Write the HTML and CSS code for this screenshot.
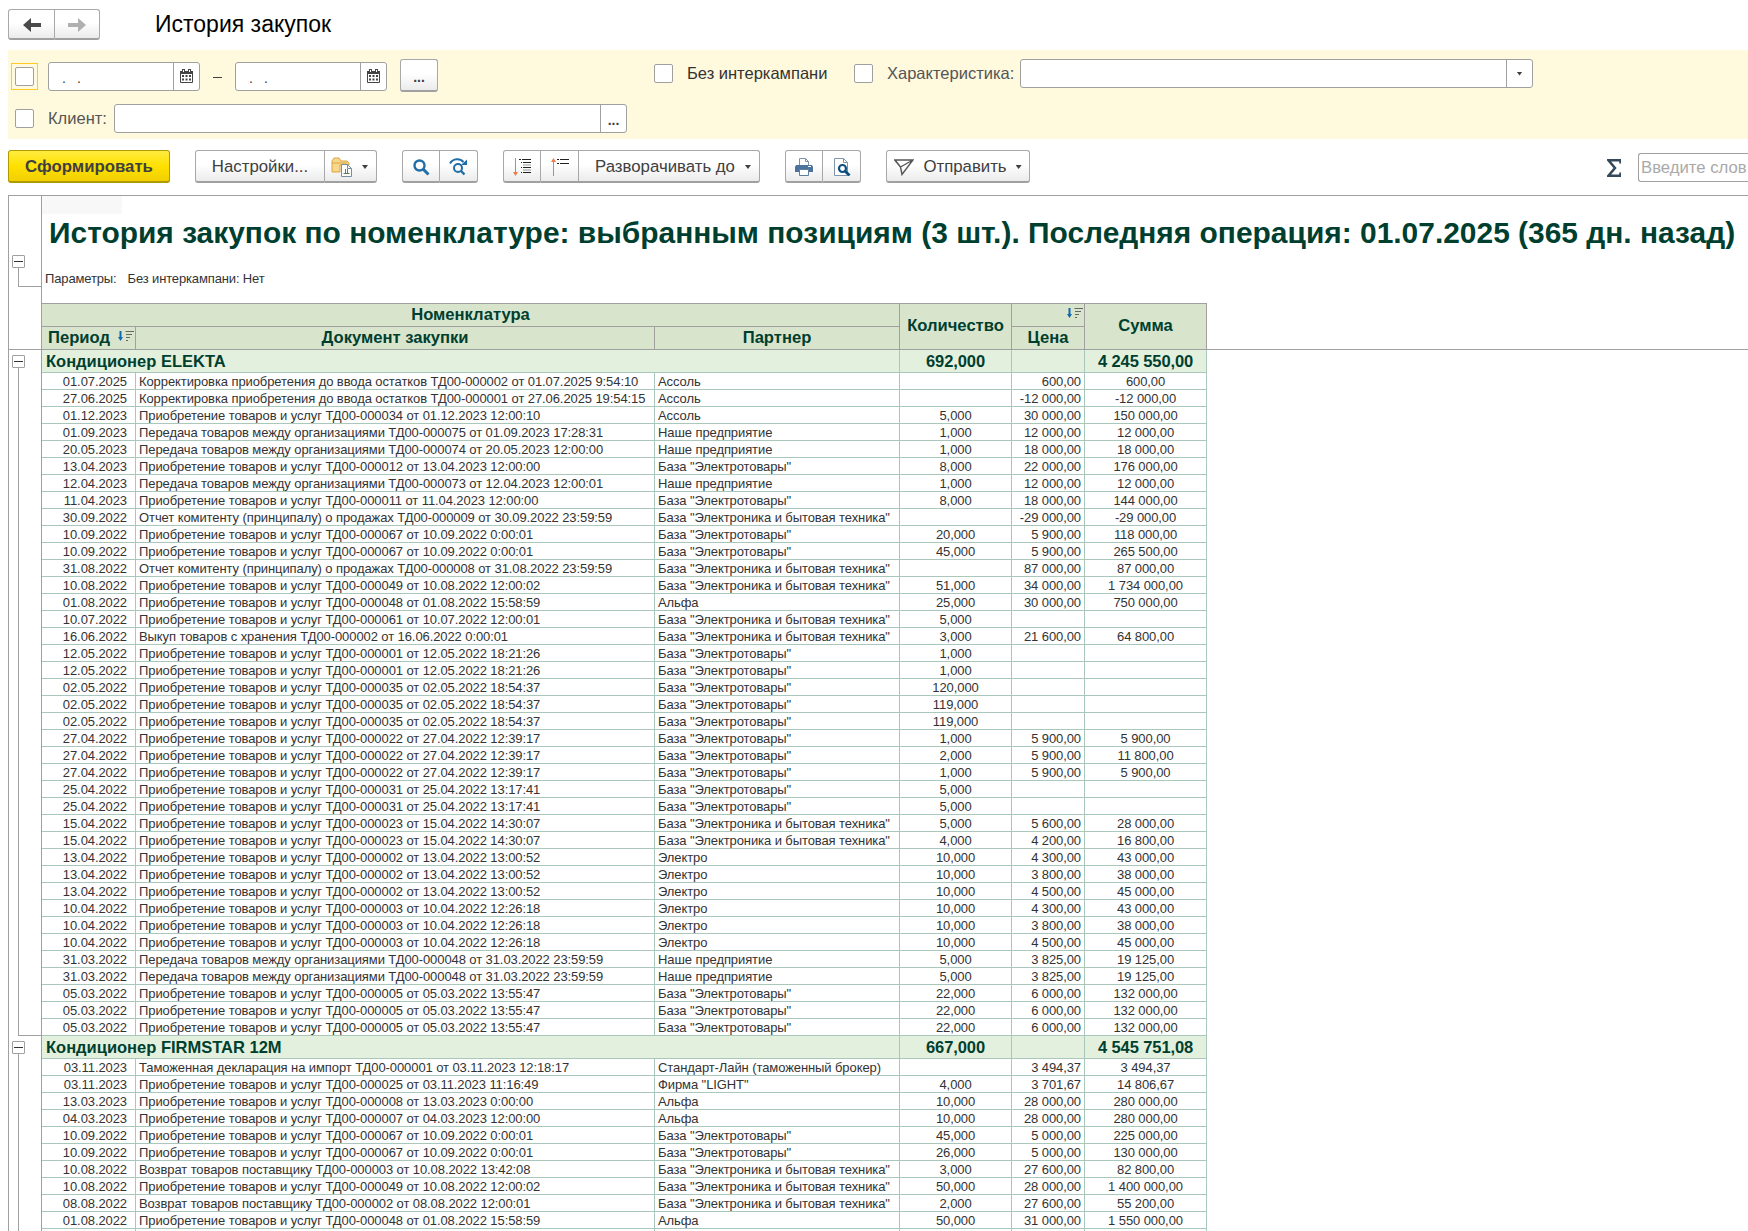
FILE: index.html
```html
<!DOCTYPE html>
<html lang="ru">
<head>
    <meta charset="UTF-8">
    <title>История закупок</title>
    <link rel="stylesheet" href="styles.css">
</head>
<body>
    <header class="top">
        <div class="group nav">
            <button class="btn"><svg width="18" height="14" viewBox="0 0 18 14"><path d="M8 0v5h10v4H8v5L0 7z" fill="#4a4a4a"/></svg></button>
            <button class="btn"><svg width="18" height="14" viewBox="0 0 18 14"><path d="M10 0v5H0v4h10v5l8-7z" fill="#b0b0b0"/></svg></button>
        </div>
        <h1>История закупок</h1>
    </header>

    <section class="filters">
        <div class="filter-row first">
            <span class="focus"><span class="check"></span></span>
            <div class="field date"><span class="value">.<i></i>.</span><span class="side"><svg width="13" height="14" viewBox="0 0 13 14"><path d="M.5 3.500h12v10H.5z" fill="#fff" stroke="#444"/><path d="M0 2h13v3H0zM2 0h3v3H2zM8 0h3v3H8z" fill="#444"/><path d="M3.500 1v2M9.500 1v2" stroke="#fff"/><path d="M2 6h2v2H2zM5.500 6h2v2h-2zM9 6h2v2H9zM2 9.500h2v2H2zM5.500 9.500h2v2h-2zM9 9.500h2v2H9z" fill="#444"/></svg></span></div>
            <span class="dash"></span>
            <div class="field date"><span class="value">.<i></i>.</span><span class="side"><svg width="13" height="14" viewBox="0 0 13 14"><path d="M.5 3.500h12v10H.5z" fill="#fff" stroke="#444"/><path d="M0 2h13v3H0zM2 0h3v3H2zM8 0h3v3H8z" fill="#444"/><path d="M3.500 1v2M9.500 1v2" stroke="#fff"/><path d="M2 6h2v2H2zM5.500 6h2v2h-2zM9 6h2v2H9zM2 9.500h2v2H2zM5.500 9.500h2v2h-2zM9 9.500h2v2H9z" fill="#444"/></svg></span></div>
            <button class="btn dots period">...</button>
            <div class="filter-right">
                <span class="check"></span>
                <span class="label dark">Без интеркампани</span>
                <span class="check second"></span>
                <span class="label">Характеристика:</span>
                <div class="field wide"><span class="value"></span><span class="side"><i class="caret"></i></span></div>
            </div>
        </div>
        <div class="filter-row client">
            <span class="check"></span>
            <span class="label">Клиент:</span>
            <div class="field wide"><span class="value"></span><span class="side dots">...</span></div>
        </div>
    </section>

    <div class="toolbar">
        <button class="btn primary">Сформировать</button>
        <div class="group settings">
            <button class="btn">Настройки...</button>
            <button class="btn"><svg width="21" height="20" viewBox="0 0 21 20"><path d="M1 15V4l2-3h5l2 3h6l2 2v2H9v7z" fill="#f8d88e" stroke="#dba440"/><path d="M1 6h15" stroke="#dba440"/><path d="M10.500 7.500h6l4 4v8h-10z" fill="#fff" stroke="#7690a2"/><path d="M16.500 7.500v4h4" fill="none" stroke="#7690a2"/><path d="M14.500 12v4M16.500 12v4" stroke="#d05038"/><path d="M12.500 16.500h6" stroke="#5a7a50"/></svg><i class="caret"></i></button>
        </div>
        <div class="group find">
            <button class="btn"><svg width="17" height="17" viewBox="0 0 17 17"><circle cx="6.500" cy="6.500" r="5" fill="none" stroke="#1f6ea8" stroke-width="2.400"/><path d="M10 10l5.500 5.500" stroke="#1f6ea8" stroke-width="3"/></svg></button>
            <button class="btn"><svg width="19" height="18" viewBox="0 0 19 18"><circle cx="9" cy="10" r="4" fill="none" stroke="#1f6ea8" stroke-width="2"/><path d="M12 13l3.500 3.500" stroke="#1f6ea8" stroke-width="2.400"/><path d="M1 5.500C4 0 11 0 14.500 4" fill="none" stroke="#1f6ea8" stroke-width="2"/><path d="M18 1.500V7h-6z" fill="#1f6ea8"/></svg></button>
        </div>
        <div class="group levels">
            <button class="btn"><svg width="18" height="18" viewBox="0 0 18 18"><path d="M2.500 0v16" stroke="#ee7a45"/><path d="M0 14h5l-2.500 4z" fill="#ee7a45"/><path d="M6 1.500h2M9 1.500h9M8 4.500h1M10 4.500h8M8 9.500h1M10 9.500h8M8 14.500h1M10 14.500h8" stroke="#222"/><path d="M10 7h8M10 12h8" stroke="#999"/></svg></button>
            <button class="btn"><svg width="18" height="18" viewBox="0 0 18 18"><path d="M2.500 2v16" stroke="#ee7a45"/><path d="M0 4h5L2.500 0z" fill="#ee7a45"/><path d="M6 1.500h2M9 1.500h9M6 5.500h2M9 5.500h9" stroke="#222"/></svg></button>
            <button class="btn">Разворачивать до<i class="caret"></i></button>
        </div>
        <div class="group print">
            <button class="btn"><svg width="18" height="18" viewBox="0 0 18 18"><path d="M4.500 8V.5h6l3 3V8" fill="#fff" stroke="#7d94aa"/><path d="M10.500.5v3h3" fill="none" stroke="#7d94aa"/><path d="M1 7h16l1 2v5H0V9z" fill="#4c739e"/><path d="M13 8.500h3" stroke="#fff"/><path d="M4.500 11.500h9v6h-9z" fill="#fff" stroke="#5f7f9f"/></svg></button>
            <button class="btn"><svg width="18" height="18" viewBox="0 0 18 18"><path d="M1.500.5h9l4 4v13h-13z" fill="#fff" stroke="#7d94aa"/><path d="M10.500.5v4h4" fill="none" stroke="#7d94aa"/><circle cx="9.500" cy="10.500" r="3.500" fill="#fff" stroke="#0b4f80" stroke-width="2.200"/><path d="M12 13l4.500 4.500" stroke="#0b4f80" stroke-width="2.800"/></svg></button>
        </div>
        <button class="btn send"><svg width="20" height="17" viewBox="0 0 20 17"><path d="M.8 1H19L8 15.500 6.500 8zM6.500 8L18 1.500M1 1l5.500 7" fill="none" stroke="#555" stroke-width="1.400"/></svg>Отправить<i class="caret"></i></button>
        <svg class="sigma" width="14" height="18" viewBox="0 0 14 18"><path d="M13.500 4.500V1.300H1.500L8 9l-6.500 7.700h12v-3.200" fill="none" stroke="#34495c" stroke-width="2.500"/></svg>
        <div class="field search">Введите слов</div>
    </div>

    <main class="report">
        <div class="report-head">
            <div class="gutter">
                <div class="tree params"><b></b></div>
            </div>
            <div class="head-body">
                <div class="patch"></div>
                <h2>История закупок по номенклатуре: выбранным позициям (3 шт.). Последняя операция: 01.07.2025 (365 дн. назад)</h2>
                <p class="params-line"><span>Параметры:</span><span>Без интеркампани: Нет</span></p>
                <table class="head">
                    <colgroup><col class="c1"><col class="c2"><col class="c3"><col class="c4"><col class="c5"><col class="c6"></colgroup>
                    <tr><th colspan="3">Номенклатура</th><th rowspan="2">Количество</th><th class="sort"><svg width="16" height="13" viewBox="0 0 16 13"><path d="M2.500 1v7" stroke="#1068b0" stroke-width="2"/><path d="M0 7h5l-2.500 4z" fill="#1068b0"/><path d="M7.500 1.500H16M8 4.500h6M8 7.500h4M8 10.500h2" stroke="#666"/></svg></th><th rowspan="2">Сумма</th></tr>
                    <tr><th class="period-th"><div>Период<svg width="16" height="13" viewBox="0 0 16 13"><path d="M2.500 1v7" stroke="#1068b0" stroke-width="2"/><path d="M0 7h5l-2.500 4z" fill="#1068b0"/><path d="M7.500 1.500H16M8 4.500h6M8 7.500h4M8 10.500h2" stroke="#666"/></svg></div></th><th>Документ закупки</th><th>Партнер</th><th>Цена</th></tr>
                </table>
            </div>
        </div>
        <div class="report-body">
            <div class="gutter">
                <div class="tree elekta"><b></b></div>
                <div class="tree firmstar"><b></b></div>
            </div>
            <table class="rows">
                <colgroup><col class="c1"><col class="c2"><col class="c3"><col class="c4"><col class="c5"><col class="c6"></colgroup>
                <tr class="total"><td colspan="3">Кондиционер ELEKTA</td><td>692,000</td><td></td><td>4 245 550,00</td></tr>
                <tr><td>01.07.2025</td><td>Корректировка приобретения до ввода остатков ТД00-000002 от 01.07.2025 9:54:10</td><td>Ассоль</td><td></td><td>600,00</td><td>600,00</td></tr>
                <tr><td>27.06.2025</td><td>Корректировка приобретения до ввода остатков ТД00-000001 от 27.06.2025 19:54:15</td><td>Ассоль</td><td></td><td>-12 000,00</td><td>-12 000,00</td></tr>
                <tr><td>01.12.2023</td><td>Приобретение товаров и услуг ТД00-000034 от 01.12.2023 12:00:10</td><td>Ассоль</td><td>5,000</td><td>30 000,00</td><td>150 000,00</td></tr>
                <tr><td>01.09.2023</td><td>Передача товаров между организациями ТД00-000075 от 01.09.2023 17:28:31</td><td>Наше предприятие</td><td>1,000</td><td>12 000,00</td><td>12 000,00</td></tr>
                <tr><td>20.05.2023</td><td>Передача товаров между организациями ТД00-000074 от 20.05.2023 12:00:00</td><td>Наше предприятие</td><td>1,000</td><td>18 000,00</td><td>18 000,00</td></tr>
                <tr><td>13.04.2023</td><td>Приобретение товаров и услуг ТД00-000012 от 13.04.2023 12:00:00</td><td>База "Электротовары"</td><td>8,000</td><td>22 000,00</td><td>176 000,00</td></tr>
                <tr><td>12.04.2023</td><td>Передача товаров между организациями ТД00-000073 от 12.04.2023 12:00:01</td><td>Наше предприятие</td><td>1,000</td><td>12 000,00</td><td>12 000,00</td></tr>
                <tr><td>11.04.2023</td><td>Приобретение товаров и услуг ТД00-000011 от 11.04.2023 12:00:00</td><td>База "Электротовары"</td><td>8,000</td><td>18 000,00</td><td>144 000,00</td></tr>
                <tr><td>30.09.2022</td><td>Отчет комитенту (принципалу) о продажах ТД00-000009 от 30.09.2022 23:59:59</td><td>База "Электроника и бытовая техника"</td><td></td><td>-29 000,00</td><td>-29 000,00</td></tr>
                <tr><td>10.09.2022</td><td>Приобретение товаров и услуг ТД00-000067 от 10.09.2022 0:00:01</td><td>База "Электротовары"</td><td>20,000</td><td>5 900,00</td><td>118 000,00</td></tr>
                <tr><td>10.09.2022</td><td>Приобретение товаров и услуг ТД00-000067 от 10.09.2022 0:00:01</td><td>База "Электротовары"</td><td>45,000</td><td>5 900,00</td><td>265 500,00</td></tr>
                <tr><td>31.08.2022</td><td>Отчет комитенту (принципалу) о продажах ТД00-000008 от 31.08.2022 23:59:59</td><td>База "Электроника и бытовая техника"</td><td></td><td>87 000,00</td><td>87 000,00</td></tr>
                <tr><td>10.08.2022</td><td>Приобретение товаров и услуг ТД00-000049 от 10.08.2022 12:00:02</td><td>База "Электроника и бытовая техника"</td><td>51,000</td><td>34 000,00</td><td>1 734 000,00</td></tr>
                <tr><td>01.08.2022</td><td>Приобретение товаров и услуг ТД00-000048 от 01.08.2022 15:58:59</td><td>Альфа</td><td>25,000</td><td>30 000,00</td><td>750 000,00</td></tr>
                <tr><td>10.07.2022</td><td>Приобретение товаров и услуг ТД00-000061 от 10.07.2022 12:00:01</td><td>База "Электроника и бытовая техника"</td><td>5,000</td><td></td><td></td></tr>
                <tr><td>16.06.2022</td><td>Выкуп товаров с хранения ТД00-000002 от 16.06.2022 0:00:01</td><td>База "Электроника и бытовая техника"</td><td>3,000</td><td>21 600,00</td><td>64 800,00</td></tr>
                <tr><td>12.05.2022</td><td>Приобретение товаров и услуг ТД00-000001 от 12.05.2022 18:21:26</td><td>База "Электротовары"</td><td>1,000</td><td></td><td></td></tr>
                <tr><td>12.05.2022</td><td>Приобретение товаров и услуг ТД00-000001 от 12.05.2022 18:21:26</td><td>База "Электротовары"</td><td>1,000</td><td></td><td></td></tr>
                <tr><td>02.05.2022</td><td>Приобретение товаров и услуг ТД00-000035 от 02.05.2022 18:54:37</td><td>База "Электротовары"</td><td>120,000</td><td></td><td></td></tr>
                <tr><td>02.05.2022</td><td>Приобретение товаров и услуг ТД00-000035 от 02.05.2022 18:54:37</td><td>База "Электротовары"</td><td>119,000</td><td></td><td></td></tr>
                <tr><td>02.05.2022</td><td>Приобретение товаров и услуг ТД00-000035 от 02.05.2022 18:54:37</td><td>База "Электротовары"</td><td>119,000</td><td></td><td></td></tr>
                <tr><td>27.04.2022</td><td>Приобретение товаров и услуг ТД00-000022 от 27.04.2022 12:39:17</td><td>База "Электротовары"</td><td>1,000</td><td>5 900,00</td><td>5 900,00</td></tr>
                <tr><td>27.04.2022</td><td>Приобретение товаров и услуг ТД00-000022 от 27.04.2022 12:39:17</td><td>База "Электротовары"</td><td>2,000</td><td>5 900,00</td><td>11 800,00</td></tr>
                <tr><td>27.04.2022</td><td>Приобретение товаров и услуг ТД00-000022 от 27.04.2022 12:39:17</td><td>База "Электротовары"</td><td>1,000</td><td>5 900,00</td><td>5 900,00</td></tr>
                <tr><td>25.04.2022</td><td>Приобретение товаров и услуг ТД00-000031 от 25.04.2022 13:17:41</td><td>База "Электротовары"</td><td>5,000</td><td></td><td></td></tr>
                <tr><td>25.04.2022</td><td>Приобретение товаров и услуг ТД00-000031 от 25.04.2022 13:17:41</td><td>База "Электротовары"</td><td>5,000</td><td></td><td></td></tr>
                <tr><td>15.04.2022</td><td>Приобретение товаров и услуг ТД00-000023 от 15.04.2022 14:30:07</td><td>База "Электроника и бытовая техника"</td><td>5,000</td><td>5 600,00</td><td>28 000,00</td></tr>
                <tr><td>15.04.2022</td><td>Приобретение товаров и услуг ТД00-000023 от 15.04.2022 14:30:07</td><td>База "Электроника и бытовая техника"</td><td>4,000</td><td>4 200,00</td><td>16 800,00</td></tr>
                <tr><td>13.04.2022</td><td>Приобретение товаров и услуг ТД00-000002 от 13.04.2022 13:00:52</td><td>Электро</td><td>10,000</td><td>4 300,00</td><td>43 000,00</td></tr>
                <tr><td>13.04.2022</td><td>Приобретение товаров и услуг ТД00-000002 от 13.04.2022 13:00:52</td><td>Электро</td><td>10,000</td><td>3 800,00</td><td>38 000,00</td></tr>
                <tr><td>13.04.2022</td><td>Приобретение товаров и услуг ТД00-000002 от 13.04.2022 13:00:52</td><td>Электро</td><td>10,000</td><td>4 500,00</td><td>45 000,00</td></tr>
                <tr><td>10.04.2022</td><td>Приобретение товаров и услуг ТД00-000003 от 10.04.2022 12:26:18</td><td>Электро</td><td>10,000</td><td>4 300,00</td><td>43 000,00</td></tr>
                <tr><td>10.04.2022</td><td>Приобретение товаров и услуг ТД00-000003 от 10.04.2022 12:26:18</td><td>Электро</td><td>10,000</td><td>3 800,00</td><td>38 000,00</td></tr>
                <tr><td>10.04.2022</td><td>Приобретение товаров и услуг ТД00-000003 от 10.04.2022 12:26:18</td><td>Электро</td><td>10,000</td><td>4 500,00</td><td>45 000,00</td></tr>
                <tr><td>31.03.2022</td><td>Передача товаров между организациями ТД00-000048 от 31.03.2022 23:59:59</td><td>Наше предприятие</td><td>5,000</td><td>3 825,00</td><td>19 125,00</td></tr>
                <tr><td>31.03.2022</td><td>Передача товаров между организациями ТД00-000048 от 31.03.2022 23:59:59</td><td>Наше предприятие</td><td>5,000</td><td>3 825,00</td><td>19 125,00</td></tr>
                <tr><td>05.03.2022</td><td>Приобретение товаров и услуг ТД00-000005 от 05.03.2022 13:55:47</td><td>База "Электротовары"</td><td>22,000</td><td>6 000,00</td><td>132 000,00</td></tr>
                <tr><td>05.03.2022</td><td>Приобретение товаров и услуг ТД00-000005 от 05.03.2022 13:55:47</td><td>База "Электротовары"</td><td>22,000</td><td>6 000,00</td><td>132 000,00</td></tr>
                <tr><td>05.03.2022</td><td>Приобретение товаров и услуг ТД00-000005 от 05.03.2022 13:55:47</td><td>База "Электротовары"</td><td>22,000</td><td>6 000,00</td><td>132 000,00</td></tr>
                <tr class="total"><td colspan="3">Кондиционер FIRMSTAR 12М</td><td>667,000</td><td></td><td>4 545 751,08</td></tr>
                <tr><td>03.11.2023</td><td>Таможенная декларация на импорт ТД00-000001 от 03.11.2023 12:18:17</td><td>Стандарт-Лайн (таможенный брокер)</td><td></td><td>3 494,37</td><td>3 494,37</td></tr>
                <tr><td>03.11.2023</td><td>Приобретение товаров и услуг ТД00-000025 от 03.11.2023 11:16:49</td><td>Фирма "LIGHT"</td><td>4,000</td><td>3 701,67</td><td>14 806,67</td></tr>
                <tr><td>13.03.2023</td><td>Приобретение товаров и услуг ТД00-000008 от 13.03.2023 0:00:00</td><td>Альфа</td><td>10,000</td><td>28 000,00</td><td>280 000,00</td></tr>
                <tr><td>04.03.2023</td><td>Приобретение товаров и услуг ТД00-000007 от 04.03.2023 12:00:00</td><td>Альфа</td><td>10,000</td><td>28 000,00</td><td>280 000,00</td></tr>
                <tr><td>10.09.2022</td><td>Приобретение товаров и услуг ТД00-000067 от 10.09.2022 0:00:01</td><td>База "Электротовары"</td><td>45,000</td><td>5 000,00</td><td>225 000,00</td></tr>
                <tr><td>10.09.2022</td><td>Приобретение товаров и услуг ТД00-000067 от 10.09.2022 0:00:01</td><td>База "Электротовары"</td><td>26,000</td><td>5 000,00</td><td>130 000,00</td></tr>
                <tr><td>10.08.2022</td><td>Возврат товаров поставщику ТД00-000003 от 10.08.2022 13:42:08</td><td>База "Электроника и бытовая техника"</td><td>3,000</td><td>27 600,00</td><td>82 800,00</td></tr>
                <tr><td>10.08.2022</td><td>Приобретение товаров и услуг ТД00-000049 от 10.08.2022 12:00:02</td><td>База "Электроника и бытовая техника"</td><td>50,000</td><td>28 000,00</td><td>1 400 000,00</td></tr>
                <tr><td>08.08.2022</td><td>Возврат товаров поставщику ТД00-000002 от 08.08.2022 12:00:01</td><td>База "Электроника и бытовая техника"</td><td>2,000</td><td>27 600,00</td><td>55 200,00</td></tr>
                <tr><td>01.08.2022</td><td>Приобретение товаров и услуг ТД00-000048 от 01.08.2022 15:58:59</td><td>Альфа</td><td>50,000</td><td>31 000,00</td><td>1 550 000,00</td></tr>
                <tr><td></td><td></td><td></td><td></td><td></td><td></td></tr>
            </table>
        </div>
    </main>
</body>
</html>
```
FILE: styles.css
```css
* {
    box-sizing: border-box;
}
body {
    margin: 0;
    height: 1231px;
    padding-left: 8px;
    overflow: hidden;
    background: #fff;
    color: #404040;
    font-family: "Liberation Sans", Arial, sans-serif;
    font-size: 17px;
    display: flex;
    flex-direction: column;
}
svg {
    display: block;
    flex: none;
}
h1, h2, p {
    margin: 0;
    white-space: nowrap;
}

/* buttons and fields */
.btn {
    height: 33px;
    padding: 2px 0 0;
    border: 1px solid #a8a8a8;
    border-bottom: 2px solid #a0a0a0;
    border-radius: 3px;
    background: linear-gradient(#fff 45%, #ebebeb);
    color: #404040;
    font-family: inherit;
    font-size: 16.8px;
    display: flex;
    align-items: center;
    justify-content: center;
    white-space: nowrap;
    flex: none;
}
.group {
    display: flex;
    flex: none;
}
.group .btn + .btn {
    border-left: none;
    border-top-left-radius: 0;
    border-bottom-left-radius: 0;
}
.group .btn:not(:last-child) {
    border-top-right-radius: 0;
    border-bottom-right-radius: 0;
}
.caret {
    width: 6px;
    height: 4px;
    background: #404040;
    clip-path: polygon(0 0, 100% 0, 50% 100%);
}
.field {
    height: 29px;
    border: 1px solid #a0a0a0;
    border-radius: 3px;
    background: #fff;
    display: flex;
    flex: none;
}
.field .value {
    flex: 1;
}
.field .side {
    width: 26px;
    border-left: 1px solid #a0a0a0;
    display: flex;
    align-items: center;
    justify-content: center;
}
.check {
    width: 19px;
    height: 19px;
    border: 1px solid #a0a0a0;
    border-radius: 2px;
    background: #fff;
    flex: none;
}
.btn.dots, .side.dots {
    padding-top: 3px;
    font-weight: bold;
    font-size: 14px;
}

/* title line */
.top {
    flex: none;
    height: 50px;
    padding-top: 9px;
    display: flex;
}
.nav .btn {
    width: 45px;
    height: 31px;
    padding-top: 1px;
}
.nav .btn:first-child {
    width: 47px;
}
h1 {
    margin-left: 55px;
    color: #000;
    font-size: 23px;
    font-weight: normal;
    line-height: 31px;
}

/* filter panel */
.filters {
    flex: none;
    height: 89px;
    background: #fff9dd;
}
.filter-row {
    display: flex;
    align-items: flex-start;
}
.first {
    height: 54px;
    padding: 9px 0 0 3px;
}
.focus {
    margin-top: 4px;
    width: 27px;
    height: 27px;
    padding: 3px;
    border: 1px solid #ffc926;
}
.focus .check {
    display: block;
}
.date {
    width: 152px;
    margin: 3px 0 0 10px;
}
.date .value {
    display: flex;
    padding: 7px 0 0 13px;
    font-size: 14px;
    line-height: 16px;
}
.date .value i {
    width: 11px;
}
.date .side {
    padding: 0 1px 2px 0;
}
.dash {
    width: 9px;
    height: 1px;
    margin: 18px 3px 0 13px;
    background: #404040;
}
.period {
    width: 38px;
    margin-left: 13px;
}
.filter-right {
    display: flex;
    margin-left: 216px;
}
.filter-right .check {
    margin-top: 5px;
}
.label {
    color: #555;
    font-size: 16.5px;
    line-height: 28px;
    white-space: nowrap;
}
.filter-right .label {
    margin-left: 14px;
    width: 133px;
}
.filter-right .dark {
    width: 140px;
    color: #333;
}
.filter-right .second {
    margin-left: 27px;
}
.wide {
    width: 513px;
}
.client {
    padding-left: 7px;
}
.client .check {
    margin-top: 5px;
}
.client .label {
    width: 66px;
    margin-left: 14px;
}

/* toolbar */
.toolbar {
    flex: none;
    height: 56px;
    padding-top: 11px;
    display: flex;
    align-items: flex-start;
}
.primary {
    width: 162px;
    border-color: #b09a00;
    background: linear-gradient(#ffec40, #ffe000 50%, #f0d000);
    font-weight: bold;
}
.settings {
    margin-left: 25px;
}
.settings .btn {
    width: 130px;
}
.settings .btn + .btn {
    width: 52px;
    padding-right: 2px;
    gap: 10px;
}
.find {
    margin-left: 25px;
}
.find .btn, .levels .btn, .print .btn {
    width: 38px;
}
.levels {
    margin-left: 25px;
}
.levels .btn:last-child {
    width: 181px;
    padding-left: 8px;
    gap: 10px;
}
.print {
    margin-left: 25px;
}
.send {
    width: 144px;
    margin-left: 25px;
    gap: 9px;
}
.sigma {
    margin: 9px 17px 0 577px;
}
.search {
    flex: 1;
    min-width: 0;
    margin-top: 3px;
    padding-left: 2px;
    border-right: none;
    border-top-right-radius: 0;
    border-bottom-right-radius: 0;
    color: #a9a9a9;
    font-size: 16.7px;
    line-height: 27px;
    white-space: nowrap;
    overflow: hidden;
}

/* report */
.report {
    border-top: 1px solid #a0a0a0;
    flex: 1;
    min-height: 0;
    overflow: hidden;
    display: flex;
    flex-direction: column;
}
.report-head {
    flex: none;
    height: 154px;
    border-bottom: 1px solid #a0a0a0;
    display: flex;
}
.report-body {
    flex: 1;
    min-height: 0;
    display: flex;
}
.gutter {
    width: 34px;
    border-left: 1px solid #a0a0a0;
    border-right: 1px solid #a0a0a0;
    flex: none;
}
.tree {
    margin-left: 9px;
    border-left: 1px solid #a0a0a0;
    border-bottom: 1px solid #a0a0a0;
}
.tree b {
    display: block;
    width: 13px;
    height: 13px;
    margin-left: -7px;
    border: 1px solid #a0a0a0;
    border-radius: 1px;
    background: linear-gradient(#333, #333) center / 9px 1px no-repeat #fff;
}
.params {
    height: 32px;
    margin-top: 59px;
}
.elekta {
    height: 681px;
    margin-top: 5px;
}
.firmstar {
    height: 191px;
    margin-top: 5px;
    border-bottom: none;
}
.patch {
    width: 80px;
    height: 18px;
    background: #f8f8f8;
}
.head-body {
    flex: 1;
    min-width: 0;
}
h2 {
    height: 57px;
    padding: 1px 0 0 7px;
    color: #003f2f;
    font-size: 29.93px;
    line-height: 36px;
}
.params-line {
    height: 32px;
    padding-left: 3px;
    display: flex;
    gap: 11px;
    color: #333;
    font-size: 13px;
    letter-spacing: -0.14px;
    line-height: 16px;
}
table {
    width: 1165px;
    border-spacing: 0;
    table-layout: fixed;
}
.c1 { width: 94px; }
.c2 { width: 519px; }
.c3 { width: 245px; }
.c4 { width: 112px; }
.c5 { width: 73px; }
.c6 { width: 122px; }
.head {
    height: 46px;
    border-top: 1px solid #a0a0a0;
}
th {
    height: 22px;
    padding: 0;
    border-right: 1px solid #a0a0a0;
    background: #d8e5cc;
    color: #003f2f;
    font-size: 16.6px;
    line-height: 20px;
    white-space: nowrap;
}
th[rowspan] {
    padding-bottom: 2px;
}
.head tr:first-child th:not([rowspan]) {
    height: 23px;
    border-bottom: 1px solid #a0a0a0;
}
.sort svg {
    margin: -3px 1px 0 auto;
}
.period-th div {
    padding-left: 6px;
    display: flex;
}
.period-th svg {
    margin: 2px 0 0 8px;
}
.rows {
    align-self: flex-start;
    flex: none;
}
td {
    height: 17px;
    padding: 2px 3px 0;
    border-right: 1px solid #a9c7bb;
    border-bottom: 1px solid #a9c7bb;
    color: #333;
    font-size: 13px;
    letter-spacing: -0.09px;
    line-height: 14px;
    white-space: nowrap;
}
td:nth-child(1) {
    padding-right: 8px;
    text-align: right;
}
td:nth-child(4), td:nth-child(6) {
    text-align: center;
}
td:nth-child(5) {
    text-align: right;
}
.rows .total td {
    height: 23px;
    padding: 0 4px;
    background: #e4f0de;
    color: #003f2f;
    font-size: 16.5px;
    font-weight: bold;
    line-height: 22px;
    text-align: center;
}
.rows .total td:first-child {
    letter-spacing: 0;
    text-align: left;
}
```
